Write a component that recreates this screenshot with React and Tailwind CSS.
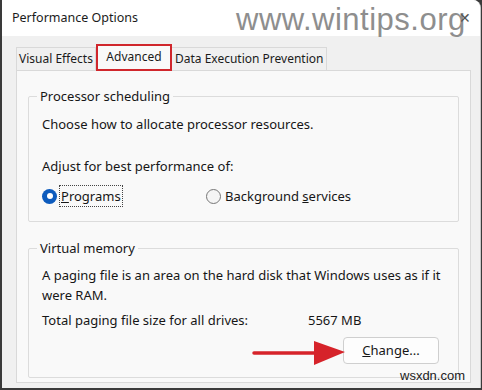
export default function App() {
  const font = { fontFamily: '"Noto Sans", "Open Sans", sans-serif' };
  return (
    <div className="relative w-[482px] h-[390px] overflow-hidden bg-[#3a3a3a]" style={font}>
      <div className="absolute inset-0 mr-[1px] mb-[2px] ml-[2px] flex flex-col rounded-tr-[8px] overflow-hidden bg-white border-r border-[#c8c8c8]">
        <div className="h-[36px] shrink-0 flex items-center pl-[10px] text-[12.5px] text-[#1b1b1b] bg-white">
          Performance Options
        </div>
        <div className="flex-1 flex flex-col bg-[#f0f0f0] pl-[14px] pr-[9px] pt-[7px]">
          <div className="flex items-end h-[27px] text-[12px] text-[#1b1b1b]">
            <div className="h-[23px] pl-[2px] pr-[2px] flex items-center border border-b-0 border-[#d9d9d9] bg-[#f0f0f0]">Visual Effects</div>
            <div className="relative h-[27px] w-[76px] flex items-center justify-center bg-[#f9f9f9] border-2 border-[#d0262c] -mb-[1px] z-10 pb-[2px]">Advanced</div>
            <div className="h-[23px] pl-[3px] pr-[3px] flex items-center border border-b-0 border-l-0 border-[#d9d9d9] bg-[#f0f0f0]">Data Execution Prevention</div>
          </div>
          <div className="flex-1 border border-[#d9d9d9] bg-[#f9f9f9] px-[11px] pt-[16px] mb-[5px] text-[13px] text-[#161616]">
            <fieldset className="border border-[#dcdcdc] rounded-[2px] pl-[13px] pr-[4px] h-[135px]">
              <legend className="ml-[-5px] px-[3px] leading-[18px]">Processor scheduling</legend>
              <div className="mt-[9px] leading-[20px]">Choose how to allocate processor resources.</div>
              <div className="mt-[22px] leading-[20px]">Adjust for best performance of:</div>
              <div className="mt-[10px] flex items-center leading-[20px]">
                <div className="flex items-center w-[164px]">
                  <span className="w-[15px] h-[15px] rounded-full bg-[#0d5bbd] flex items-center justify-center">
                    <span className="w-[6px] h-[6px] rounded-full bg-white"></span>
                  </span>
                  <span className="ml-[3px] px-[1px] outline outline-1 outline-dotted outline-[#444]"><span className="underline">P</span>rograms</span>
                </div>
                <div className="flex items-center">
                  <span className="w-[15px] h-[15px] rounded-full border border-[#777] bg-[#f5f5f5]"></span>
                  <span className="ml-[4px]">Background <span className="underline">s</span>ervices</span>
                </div>
              </div>
            </fieldset>
            <fieldset className="mt-[17px] border border-[#dcdcdc] rounded-[2px] pl-[13px] pr-[4px] h-[139px]">
              <legend className="ml-[-5px] px-[3px] leading-[18px]">Virtual memory</legend>
              <div className="mt-[8px] leading-[20px]">A paging file is an area on the hard disk that Windows uses as if it<br />were RAM.</div>
              <div className="mt-[5px] flex leading-[20px]">
                <span className="w-[266px]">Total paging file size for all drives:</span>
                <span>5567 MB</span>
              </div>
              <div className="mt-[7px] flex justify-end pr-[15px]">
                <div className="w-[96px] h-[27px] flex items-center justify-center border border-[#cfcfcf] rounded-[4px] bg-[#fdfdfd]">
                  <span><span className="underline">C</span>hange...</span>
                </div>
              </div>
            </fieldset>
          </div>
        </div>
      </div>
      <div className="absolute left-[236px] top-[1px] text-[31px] leading-[38px] text-[#8e8e8e] tracking-[0.5px]" style={{ fontFamily: '"Liberation Sans", Arial, sans-serif' }}>
        www.wintips.org
      </div>
      <div className="absolute left-[459px] top-[10px] text-[#555] text-[14px] leading-[16px]">✕</div>
      <div className="absolute left-[400px] top-[368px] text-[13px] leading-[16px] text-[#222]" style={{ fontFamily: '"Liberation Sans", Arial, sans-serif' }}>
        wsxdn.com
      </div>
      <svg className="absolute left-[252px] top-[338px]" width="95" height="30" viewBox="0 0 95 30">
        <line x1="2" y1="15" x2="70" y2="15" stroke="#d6232a" strokeWidth="3.5" strokeLinecap="round" />
        <polygon points="62,3 93,14 62,27" fill="#d6232a" />
      </svg>
    </div>
  );
}
